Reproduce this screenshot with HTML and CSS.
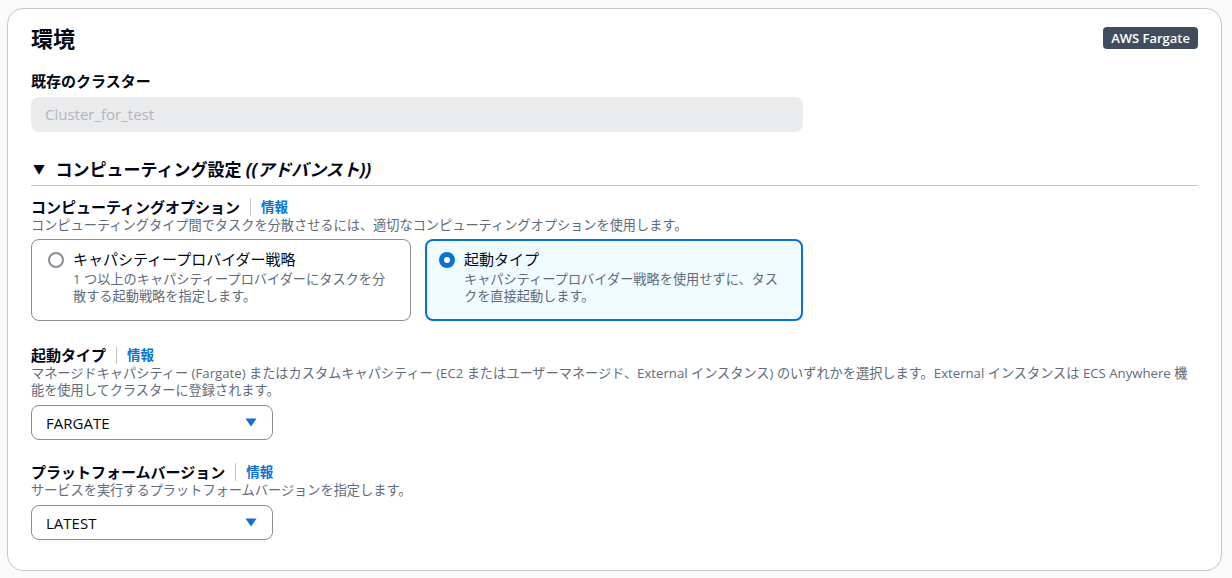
FILE: index.html
```html
<!DOCTYPE html>
<html lang="ja">
  <head>
    <meta charset="UTF-8" />
    <meta name="viewport" content="width=device-width, initial-scale=1.0" />
    <title>環境</title>
    <link rel="stylesheet" href="styles.css">
  </head>
  <body>
    <div class="container">
      <div class="header">
        <h2>環境</h2>
        <span class="badge">AWS Fargate</span>
      </div>

      <div class="label first">既存のクラスター</div>
      <div class="input disabled">Cluster_for_test</div>

      <div class="expand-heading">
        <span class="caret-down">▼</span>
        コンピューティング設定 <i>((アドバンスト))</i>
      </div>

      <div class="field">
        <div class="label">
          コンピューティングオプション
          <span class="sep"></span>
          <a class="info" href="#">情報</a>
        </div>
        <div class="desc">コンピューティングタイプ間でタスクを分散させるには、適切なコンピューティングオプションを使用します。</div>
        <div class="tiles">
          <div class="tile">
            <span class="radio"></span>
            <div>
              <div class="tile-label">キャパシティープロバイダー戦略</div>
              <div class="tile-desc">1 つ以上のキャパシティープロバイダーにタスクを分散する起動戦略を指定します。</div>
            </div>
          </div>
          <div class="tile selected">
            <span class="radio checked"></span>
            <div>
              <div class="tile-label">起動タイプ</div>
              <div class="tile-desc">キャパシティープロバイダー戦略を使用せずに、タスクを直接起動します。</div>
            </div>
          </div>
        </div>
      </div>

      <div class="field">
        <div class="label">
          起動タイプ
          <span class="sep"></span>
          <a class="info" href="#">情報</a>
        </div>
        <div class="desc">マネージドキャパシティー (Fargate) またはカスタムキャパシティー (EC2 またはユーザーマネージド、External インスタンス) のいずれかを選択します。External インスタンスは ECS Anywhere 機能を使用してクラスターに登録されます。</div>
        <div class="select">
          <span>FARGATE</span>
          <svg width="12" height="9" viewBox="0 0 12 9"><path d="M0.5 0.5h11L6 8.5z" fill="#0972d3"/></svg>
        </div>
      </div>

      <div class="field last">
        <div class="label">
          プラットフォームバージョン
          <span class="sep"></span>
          <a class="info" href="#">情報</a>
        </div>
        <div class="desc">サービスを実行するプラットフォームバージョンを指定します。</div>
        <div class="select">
          <span>LATEST</span>
          <svg width="12" height="9" viewBox="0 0 12 9"><path d="M0.5 0.5h11L6 8.5z" fill="#0972d3"/></svg>
        </div>
      </div>
    </div>
  </body>
</html>
```

FILE: styles.css
```css
body {
  margin: 0;
  padding: 8px 10px 0 7px;
  background: #fafafa;
  font-family: "Open Sans", "Noto Sans CJK JP", sans-serif;
  color: #000716;
}

.container {
  background: #fff;
  border: 1px solid #c6c6cd;
  border-radius: 16px;
  padding: 14px 23px 30px;
}

.header {
  display: flex;
  justify-content: space-between;
  align-items: center;
  height: 30px;
}

.header h2 {
  margin: 0;
  font-size: 22px;
  line-height: 30px;
  font-weight: 700;
}

.badge {
  background: #414d5c;
  color: #fff;
  font-size: 13px;
  font-weight: 600;
  line-height: 22px;
  padding: 0 8px;
  border-radius: 4px;
}

.label {
  display: flex;
  align-items: center;
  font-size: 15px;
  font-weight: 700;
  line-height: 20px;
}

.label.first {
  margin-top: 18px;
}

.sep {
  display: inline-block;
  width: 1px;
  height: 18px;
  background: #c6c6cd;
  margin: 0 10px;
}

.info {
  color: #0972d3;
  font-size: 13.5px;
  font-weight: 700;
  text-decoration: none;
}

.input {
  width: 772px;
  box-sizing: border-box;
  height: 35px;
  margin-top: 6px;
  border-radius: 8px;
  padding: 0 14px;
  font-size: 15px;
  line-height: 35px;
}

.input.disabled {
  background: #e9ebed;
  color: #b4b4bb;
}

.expand-heading {
  margin-top: 26px;
  font-size: 17px;
  font-weight: 700;
  line-height: 24px;
  padding-bottom: 3px;
  border-bottom: 1px solid #c6c6cd;
}

.caret-down {
  display: inline-block;
  font-size: 12px;
  margin: 0 6px 0 2px;
  vertical-align: 2px;
}

.field {
  margin-top: 24px;
}

.field.last {
  margin-top: 22px;
}

.expand-heading + .field {
  margin-top: 11px;
}

.desc {
  font-size: 13.2px;
  line-height: 17px;
  color: #5f6b7a;
}

.tiles {
  display: grid;
  grid-template-columns: 380px 378px;
  gap: 14px;
  margin-top: 5px;
}

.tile {
  display: flex;
  gap: 9px;
  box-sizing: border-box;
  height: 82px;
  border: 1px solid #8c8c94;
  border-radius: 8px;
  padding: 9px 20px 0 16px;
}

.tile.selected {
  border: 2px solid #0972d3;
  background: #f0fbff;
  padding: 8px 19px 0 12px;
}

.radio {
  flex: none;
  width: 16px;
  height: 16px;
  box-sizing: border-box;
  border: 2px solid #8c8c94;
  border-radius: 50%;
  margin-top: 3px;
}

.radio.checked {
  border: 5px solid #0972d3;
  background: #fff;
}

.tile-label {
  font-size: 15px;
  line-height: 20px;
}

.tile-desc {
  font-size: 13.2px;
  line-height: 17px;
  color: #5f6b7a;
  margin-top: 2px;
}

.select {
  display: flex;
  justify-content: space-between;
  align-items: center;
  width: 242px;
  height: 35px;
  box-sizing: border-box;
  margin-top: 6px;
  border: 1px solid #8c8c94;
  border-radius: 8px;
  padding: 0 15px 0 14px;
  font-size: 15px;
}
```
